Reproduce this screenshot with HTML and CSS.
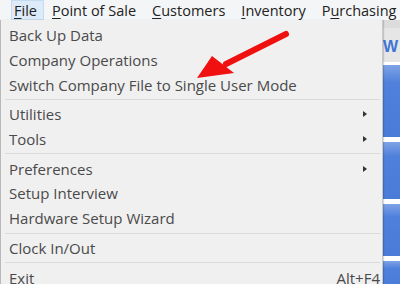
FILE: index.html
```html
<!DOCTYPE html>
<html lang="en">
<head>
    <meta charset="UTF-8">
    <title>File Menu</title>
    <link rel="stylesheet" href="styles.css">
</head>
<body>
    <div class="frame">
        <div class="edge"></div>
        <div class="main">
            <nav class="menubar">
                <span class="menubar-item open"><u>F</u>ile</span>
                <span class="menubar-item"><u>P</u>oint of Sale</span>
                <span class="menubar-item"><u>C</u>ustomers</span>
                <span class="menubar-item"><u>I</u>nventory</span>
                <span class="menubar-item">P<u>u</u>rchasing</span>
            </nav>
            <div class="body-row">
                <ul class="dropdown">
                    <li class="menu-item">Back Up Data</li>
                    <li class="menu-item">Company Operations</li>
                    <li class="menu-item">Switch Company File to Single User Mode</li>
                    <li class="separator"></li>
                    <li class="menu-item">Utilities <span class="submenu"></span></li>
                    <li class="menu-item">Tools <span class="submenu"></span></li>
                    <li class="separator"></li>
                    <li class="menu-item">Preferences <span class="submenu"></span></li>
                    <li class="menu-item">Setup Interview</li>
                    <li class="menu-item">Hardware Setup Wizard</li>
                    <li class="separator"></li>
                    <li class="menu-item">Clock In/Out</li>
                    <li class="separator"></li>
                    <li class="menu-item">Exit <span class="shortcut">Alt+F4</span></li>
                </ul>
                <div class="backdrop">
                    <div class="backdrop-top"></div>
                    <div class="backdrop-title">W</div>
                    <div class="tile tile-a"></div>
                    <div class="tile tile-b"></div>
                    <div class="tile tile-c"></div>
                    <div class="tile tile-d"></div>
                </div>
            </div>
        </div>
    </div>

    <!-- annotation arrow -->
    <svg class="arrow" width="400" height="284" viewBox="0 0 400 284">
        <line x1="286" y1="34" x2="226" y2="64" stroke="#f01010" stroke-width="6" stroke-linecap="round"/>
        <polygon points="197,78 212,56 234,73" fill="#f01010"/>
    </svg>
</body>
</html>
```

FILE: styles.css
```css
/* Base */
* {
    margin: 0;
    padding: 0;
    box-sizing: border-box;
}

body {
    width: 400px;
    height: 284px;
    overflow: hidden;
    font-family: 'Open Sans', 'Noto Sans', sans-serif;
    font-size: 15px;
    background: #f0f0f0;
    position: relative;
}

.frame {
    display: flex;
    height: 100%;
}

.edge {
    width: 3px;
    background: linear-gradient(#8c3b3b 0, #8c3b3b 20px, #c9c9c9 20px);
}

.main {
    flex: 1;
    display: flex;
    flex-direction: column;
}

/* Menu bar */
.menubar {
    height: 20px;
    display: flex;
    align-items: center;
    padding-left: 11px;
    background: #f4f5f6;
    color: #222;
    font-size: 14.5px;
}

.menubar-item {
    height: 20px;
    line-height: 19px;
    padding: 0 7px;
    border: 1px solid transparent;
    white-space: nowrap;
}

.menubar-item.open {
    padding: 0 6px 0 2px;
    background: #dcebf7;
    border-color: #c4dcef;
}

.menubar-item u {
    text-decoration-thickness: 1px;
    text-underline-offset: 2px;
}

/* Dropdown */
.body-row {
    flex: 1;
    display: flex;
}

.dropdown {
    width: 383px;
    list-style: none;
    background: #f0f0f0;
    border-left: 1px solid #b9b9b9;
    border-right: 1px solid #c8c8c8;
    padding-top: 3px;
    color: #4a4a4a;
    box-shadow: 1px 0 1px rgba(0,0,0,0.15);
    position: relative;
}

.menu-item {
    height: 24.7px;
    display: flex;
    align-items: center;
    justify-content: space-between;
    padding: 0 2px 0 8px;
    white-space: nowrap;
}

.submenu {
    width: 0;
    height: 0;
    margin-right: 13px;
    border-top: 3.5px solid transparent;
    border-bottom: 3.5px solid transparent;
    border-left: 4px solid #333;
}

.separator {
    height: 1px;
    margin: 2px 2px 2px 4px;
    background: #dadada;
}

/* Window content behind the menu */
.backdrop {
    flex: 1;
    display: flex;
    flex-direction: column;
    background: #fff;
}

.backdrop-top {
    height: 8px;
    background: #dcdcdc;
}

.backdrop-title {
    height: 34px;
    background: #e6e6e6;
    color: #3d74d6;
    font-family: 'Liberation Sans', sans-serif;
    font-weight: 700;
    font-size: 16px;
    padding-top: 12px;
    line-height: 14px;
    margin-bottom: 3px;
}

.tile {
    background: linear-gradient(#7fa3e6, #4f80dc 25%, #4a7bd8);
    margin-bottom: 5px;
}

.tile-a { height: 72px; }
.tile-b { height: 57px; }
.tile-c { height: 52px; }
.tile-d { height: 30px; }

/* Annotation */
.arrow {
    position: absolute;
    left: 0;
    top: 0;
    pointer-events: none;
}
```
